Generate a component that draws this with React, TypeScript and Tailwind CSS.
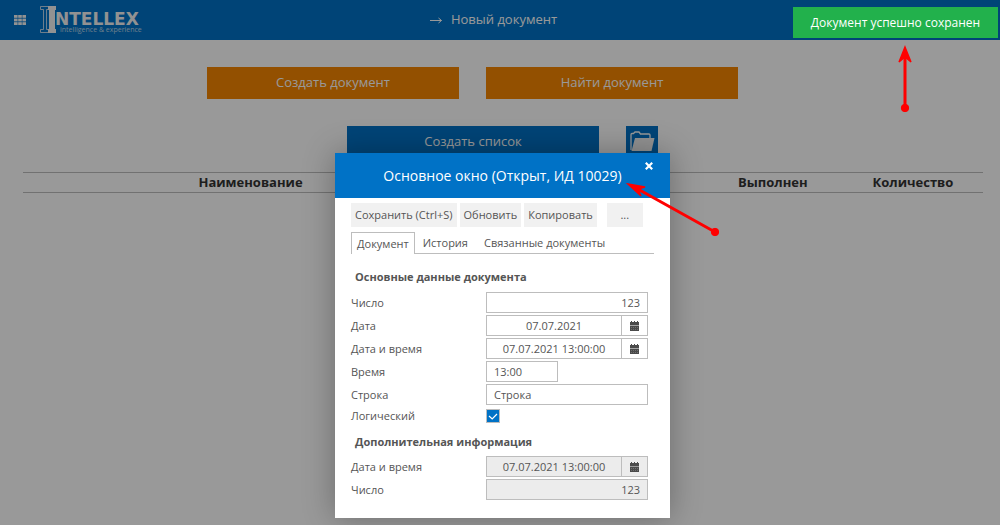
import { useState, type ReactNode } from 'react';

const TOOLBAR = ['Сохранить (Ctrl+S)', 'Обновить', 'Копировать'];
const TABS = ['Документ', 'История', 'Связанные документы'];

const inputClass = 'h-[21px] min-w-0 border border-[#bdbdbd] px-[7px] text-[#555] outline-none';

function Logo() {
  return (
    <svg width="108" height="32" viewBox="0 0 108 32" role="img" aria-label="Intellex" fill="#f4f4f4">
      <path d="M0.5 2.5H9.5V5.5H6.5V25.5H9.5V28.5H0.5V25.5H3.5V5.5H0.5Z" fill="none" stroke="#f4f4f4" strokeOpacity="0.75" />
      <path d="M8 2H16V6H15V25H16V29H8V25H9V6H8Z" />
      <text x="15" y="21" fontFamily="DejaVu Sans, sans-serif" fontSize="17" fontWeight="700">
        NTELLEX
      </text>
      <text x="20" y="28" fontFamily="Open Sans, sans-serif" fontSize="7" fillOpacity="0.75">
        intelligence &amp; experience
      </text>
    </svg>
  );
}

function GridIcon() {
  return (
    <svg width="12" height="10" viewBox="0 0 12 10" fill="#f4f4f4">
      {[0, 3.6, 7.2].map((y) =>
        [0, 4.2, 8.4].map((x) => <rect key={`${x}-${y}`} x={x} y={y} width="3.6" height="2.8" />)
      )}
    </svg>
  );
}

function FolderIcon() {
  return (
    <svg width="26" height="22" viewBox="0 0 26 22">
      <path
        d="M2 19V3.5Q2 2.5 3 2.5H4.5L6 1H10L11.5 3H20Q21 3 21 4V7"
        fill="none"
        stroke="#fff"
        strokeWidth="1.3"
      />
      <path d="M6 7H25.5L22.5 20H2.5Z" fill="#f4f4f4" />
    </svg>
  );
}

function CalendarIcon() {
  return (
    <svg width="9" height="10" viewBox="0 0 9 10" fill="#4a4a4a">
      <path d="M0 1H1V0H2V1H4V0H5V1H7V0H8V1H9V4H0Z" />
      <path d="M0 4.5H9V10H0Z" />
      <path d="M1 6.5H8" stroke="#888" strokeWidth="0.6" strokeDasharray="1 1" />
      <path d="M1 8.5H8" stroke="#888" strokeWidth="0.6" strokeDasharray="1 1" />
    </svg>
  );
}

function Row({ id, label, children }: { id: string; label: string; children: ReactNode }) {
  return (
    <div className="flex min-h-[18px] items-center">
      <label htmlFor={id} className="w-[135px] shrink-0">
        {label}
      </label>
      {children}
    </div>
  );
}

function DateField({ id, value, disabled }: { id: string; value: string; disabled?: boolean }) {
  return (
    <div className="flex w-[162px]">
      <input
        id={id}
        defaultValue={value}
        disabled={disabled}
        className={`${inputClass} flex-1 text-center disabled:bg-[#ececec]`}
      />
      <button
        type="button"
        aria-label="Календарь"
        disabled={disabled}
        className="flex h-[21px] w-[26px] items-center justify-center border border-l-0 border-[#bdbdbd] disabled:bg-[#ececec]"
      >
        <CalendarIcon />
      </button>
    </div>
  );
}

function DocumentDialog() {
  const [tab, setTab] = useState(TABS[0]);
  const [flag, setFlag] = useState(true);

  return (
    <div
      role="dialog"
      aria-labelledby="dialog-title"
      className="relative w-[335px] bg-white pb-[18px] text-[11px] leading-4 text-[#555] shadow-[0_0_30px_rgba(0,0,0,0.3)]"
    >
      <div className="flex h-[45px] items-center justify-center bg-[#0072c6] text-white">
        <h2 id="dialog-title" className="text-[14px] font-medium">
          Основное окно (Открыт, ИД 10029)
        </h2>
        <button type="button" aria-label="Закрыть" className="absolute top-[9px] right-[17px]">
          <svg width="8" height="8" viewBox="0 0 8 8" stroke="#fff" strokeWidth="2.2">
            <path d="M0.8 0.8L7.2 7.2M7.2 0.8L0.8 7.2" />
          </svg>
        </button>
      </div>

      <div className="px-4">
        <div className="flex gap-[3px] pt-[5px]">
          {TOOLBAR.map((text) => (
            <button key={text} type="button" className="h-6 bg-[#f1f1f1] px-1 whitespace-nowrap">
              {text}
            </button>
          ))}
          <button type="button" className="ml-[7px] h-6 w-9 bg-[#f1f1f1]">
            ...
          </button>
        </div>

        <div role="tablist" className="mt-[5px] flex h-[22px] border-b border-[#bdbdbd]">
          {TABS.map((text) => (
            <button
              key={text}
              type="button"
              role="tab"
              aria-selected={tab === text}
              onClick={() => setTab(text)}
              className={
                tab === text
                  ? '-mb-px border border-b-0 border-[#bdbdbd] bg-white px-[5px]'
                  : 'px-2 whitespace-nowrap'
              }
            >
              {text}
            </button>
          ))}
        </div>

        <h3 className="mt-[15px] ml-1 font-bold">Основные данные документа</h3>
        <div className="mt-[7px] flex flex-col gap-[2px]">
          <Row id="number" label="Число">
            <input id="number" defaultValue="123" className={`${inputClass} w-[162px] text-right`} />
          </Row>
          <Row id="date" label="Дата">
            <DateField id="date" value="07.07.2021" />
          </Row>
          <Row id="datetime" label="Дата и время">
            <DateField id="datetime" value="07.07.2021 13:00:00" />
          </Row>
          <Row id="time" label="Время">
            <input id="time" defaultValue="13:00" className={`${inputClass} w-[72px]`} />
          </Row>
          <Row id="string" label="Строка">
            <input id="string" defaultValue="Строка" className={`${inputClass} w-[162px]`} />
          </Row>
          <Row id="flag" label="Логический">
            <span className="relative flex">
              <input
                id="flag"
                type="checkbox"
                checked={flag}
                onChange={(e) => setFlag(e.target.checked)}
                className="size-[14px] appearance-none rounded-none border border-[#bdbdbd] checked:bg-[#0072c6]"
              />
              {flag && (
                <svg className="pointer-events-none absolute inset-0" width="14" height="14" fill="none" stroke="#fff" strokeWidth="1.2">
                  <path d="M3 7L6.2 10L11 5" />
                </svg>
              )}
            </span>
          </Row>
        </div>

        <h3 className="mt-[9px] ml-1 font-bold">Дополнительная информация</h3>
        <div className="mt-[6px] flex flex-col gap-[2px]">
          <Row id="extra-datetime" label="Дата и время">
            <DateField id="extra-datetime" value="07.07.2021 13:00:00" disabled />
          </Row>
          <Row id="extra-number" label="Число">
            <input id="extra-number" defaultValue="123" disabled className={`${inputClass} w-[162px] bg-[#ececec] text-right`} />
          </Row>
        </div>
      </div>
    </div>
  );
}

function Pointers() {
  return (
    <svg className="pointer-events-none absolute top-0 left-0" width="1000" height="260" fill="red" stroke="red">
      <path d="M905 108V54M715 232L636 188" fill="none" strokeWidth="3" />
      <path d="M905 47L911 62L905 57L899 62Z" strokeWidth="1.4" />
      <path d="M628 184L645 187L638 189L641 196Z" strokeWidth="1.4" />
      <circle cx="905" cy="108" r="3.7" />
      <circle cx="715" cy="232" r="3.7" />
    </svg>
  );
}

export default function App() {
  return (
    <div className="relative min-h-screen overflow-hidden bg-white font-['Open_Sans',sans-serif]">
      <header className="relative flex h-10 items-center bg-[#0072c6] pl-[14px] text-white">
        <button type="button" aria-label="Меню">
          <GridIcon />
        </button>
        <a href="#" className="ml-[14px]">
          <Logo />
        </a>
        <h1 className="pointer-events-none absolute inset-x-0 flex items-center justify-center gap-2 pr-[14px] text-[13px]">
          <svg width="14" height="8" viewBox="0 0 14 8" fill="none" stroke="#fff">
            <path d="M1 4.5H12.5M9.5 2L12.5 4.5L9.5 7" />
          </svg>
          Новый документ
        </h1>
      </header>

      <main>
        <div className="flex justify-center gap-[27px] pt-[27px] pr-[55px] text-[13px] text-white">
          <button type="button" className="h-8 w-[252px] bg-[#f58500]">
            Создать документ
          </button>
          <button type="button" className="h-8 w-[252px] bg-[#f58500]">
            Найти документ
          </button>
        </div>
        <div className="flex justify-center gap-[27px] pt-[27px] pl-[5px] text-[13px] text-white">
          <button type="button" className="h-8 w-[252px] bg-[#0072c6]">
            Создать список
          </button>
          <button type="button" aria-label="Открыть папку" className="flex size-8 items-center justify-center bg-[#0072c6]">
            <FolderIcon />
          </button>
        </div>

        <div className="mt-[14px] pr-[17px] pl-[23px]">
          <table className="w-full table-fixed text-[13px] leading-[19px] text-[#333]">
            <thead>
              <tr className="border-y border-[#bdbdbd]">
                <th className="w-[47.4%]">Наименование</th>
                <th />
                <th className="w-[14.6%]">Выполнен</th>
                <th className="w-[14.6%]">Количество</th>
              </tr>
            </thead>
          </table>
        </div>
      </main>

      <div className="absolute inset-0 flex items-start justify-center bg-black/40 pt-[153px] pl-[5px]">
        <DocumentDialog />
      </div>

      <div
        role="status"
        className="absolute top-[7px] right-[2px] flex h-[31px] w-[205px] items-center justify-center bg-[#22b14c] text-[12px] text-white"
      >
        Документ успешно сохранен
      </div>

      <Pointers />
    </div>
  );
}
